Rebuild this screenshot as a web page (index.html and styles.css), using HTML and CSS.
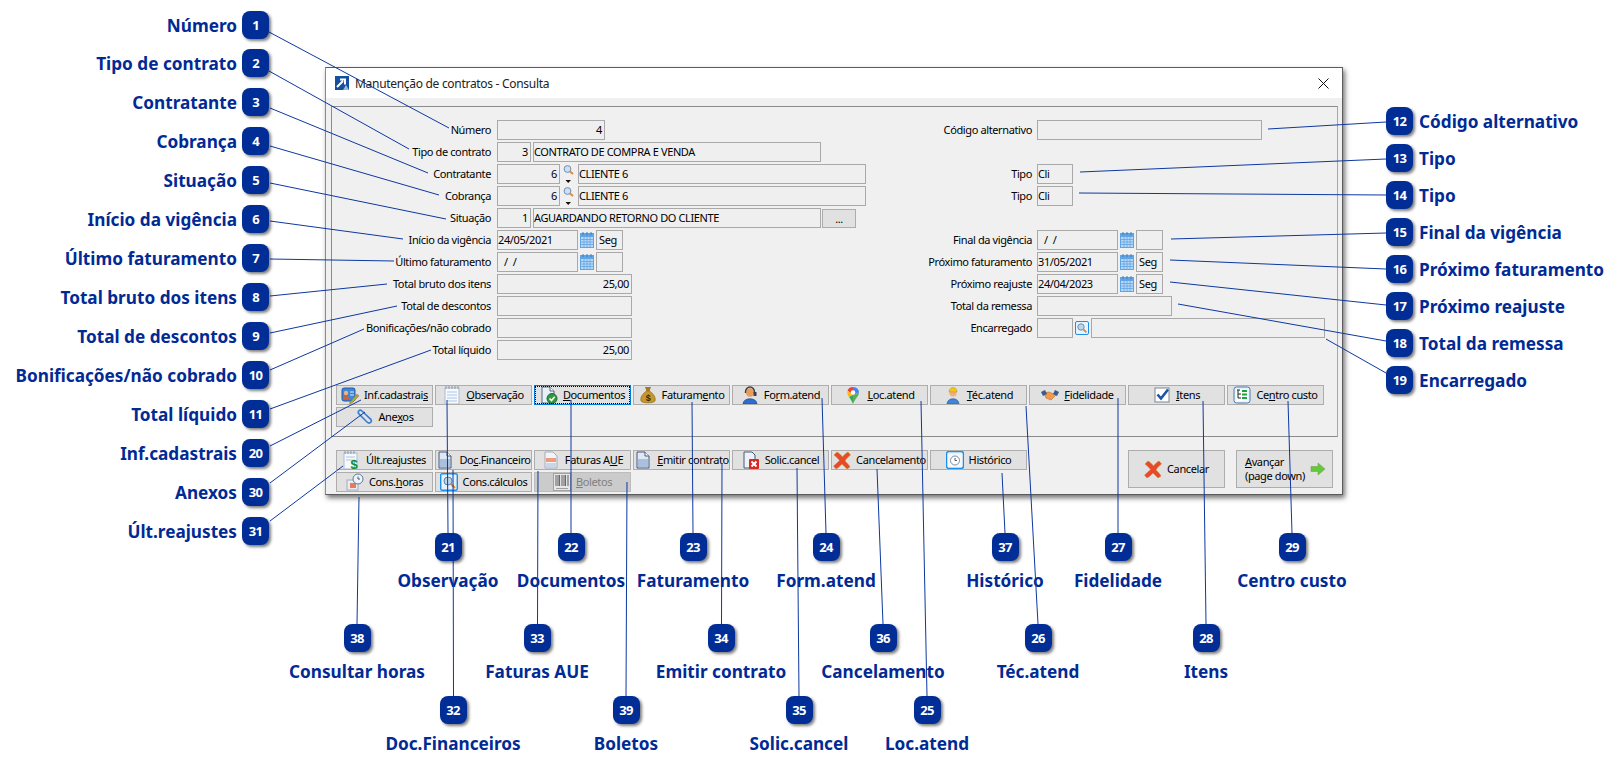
FILE: index.html
```html
<!DOCTYPE html>
<html lang="pt-BR">
<head>
<meta charset="utf-8">
<title>Manutenção de contratos - Consulta</title>
<link rel="stylesheet" href="styles.css">
</head>
<body>
<svg class="defs" width="0" height="0" aria-hidden="true">
  <defs>
    <symbol id="i-app" viewBox="0 0 14 14"><rect width="14" height="14" fill="#16509c"/><path d="M2 11 L8 5 M5 3.5 H10 V8.5" stroke="#fff" stroke-width="2" fill="none"/><path d="M8 14 L11 9 L14 14Z" fill="#9db9d8"/></symbol>
    <symbol id="i-lookup" viewBox="0 0 18 20"><circle cx="7.5" cy="5" r="3.4" fill="#cfe0f2" stroke="#6f8fb0"/><path d="M10 7.5 L13 10" stroke="#e58a3c" stroke-width="2.2"/><path d="M5.5 16 H11 L8.2 19Z" fill="#111"/></symbol>
    <symbol id="i-cal" viewBox="0 0 14 16"><rect y="1" width="14" height="15" fill="#5fa4e4"/><rect x="1" y="5" width="12" height="10" fill="#b9d8f5"/><path d="M1 7.5 H13 M1 10 H13 M1 12.5 H13 M4 5 V15 M7 5 V15 M10 5 V15" stroke="#5fa4e4" stroke-width=".8"/><path d="M3 0 V3 M7 0 V3 M11 0 V3" stroke="#3d7fc0"/></symbol>
    <symbol id="i-search" viewBox="0 0 14 14"><rect x=".5" y=".5" width="13" height="13" rx="1.5" fill="#e8f4ff" stroke="#1d8fe8"/><circle cx="6" cy="6" r="3.2" fill="#bcd6ee" stroke="#6f8fb0"/><path d="M8.4 8.4 L11.4 11.4" stroke="#e58a3c" stroke-width="2"/></symbol>
    <symbol id="i-inf" viewBox="0 0 18 18"><rect x="1" y="2" width="13" height="13" rx="2" fill="#3f86d8" stroke="#245a9e"/><circle cx="5" cy="7" r="2.2" fill="#f0b27a"/><path d="M2 13 C2 9 8 9 8 13Z" fill="#d9622b"/><path d="M9 6 H13 M9 9 H13" stroke="#dbe9f8"/><path d="M9 16 L16 8 L18 10 L11 17 L8.5 17.5Z" fill="#7cc142" stroke="#c44" stroke-width=".5"/></symbol>
    <symbol id="i-note" viewBox="0 0 18 18"><rect x="2" y="2" width="14" height="16" fill="#f6f9fd" stroke="#aebccd"/><path d="M4 6 H14 M4 9 H14 M4 12 H14 M4 15 H14" stroke="#a9c6e6"/><path d="M3 0 V3 M6 0 V3 M9 0 V3 M12 0 V3 M15 0 V3" stroke="#8c97a5"/></symbol>
    <symbol id="i-doccheck" viewBox="0 0 18 18"><path d="M2 1 H10 L14 5 V17 H2Z" fill="#e9f0f8" stroke="#54687f"/><path d="M10 1 V5 H14" fill="#fff" stroke="#54687f"/><circle cx="12" cy="12.5" r="5" fill="#2d9a3c" stroke="#1c6b29"/><path d="M9.5 12.5 L11.5 14.5 L14.7 10.8" fill="none" stroke="#fff" stroke-width="1.6"/></symbol>
    <symbol id="i-bag" viewBox="0 0 18 18"><path d="M6 1 H12 L10.5 5 H7.5Z" fill="#a8781f"/><path d="M7.5 5 H10.5 C15 8 17 12 16 15 C15 17.5 3 17.5 2 15 C1 12 3 8 7.5 5Z" fill="#c9962c" stroke="#84601a" stroke-width=".6"/><text x="9" y="14.5" font-size="9" font-weight="700" text-anchor="middle" fill="#3b2a07" font-family="Liberation Sans">$</text></symbol>
    <symbol id="i-headset" viewBox="0 0 18 18"><path d="M2 18 C2 11 16 11 16 18Z" fill="#2c6fd0" stroke="#18448a" stroke-width=".6"/><circle cx="9" cy="6.5" r="4.2" fill="#e99b5d"/><path d="M4.4 7 C4 -1 14 -1 13.6 7" fill="none" stroke="#3a3f49" stroke-width="1.4"/><rect x="12.5" y="6" width="3" height="4" fill="#3a3f49"/></symbol>
    <symbol id="i-pin" viewBox="0 0 18 18"><path d="M9 1 C13 1 15 4 15 6.5 L9 9Z" fill="#4285f4"/><path d="M9 1 C6 1 4 2.800 3.600 4.500 L9 9Z" fill="#ea4335"/><path d="M3.300 6.500 C3.300 8 4 9.500 5 11 L9 9 L3.600 4.500Z" fill="#fbbc04"/><path d="M5 11 C6.500 13 8 15 9 18 L9 9Z" fill="#34a853"/><path d="M9 18 C10 15 12 13 13.500 10.500 C14.500 9 15 8 15 6.500 L9 9Z" fill="#5fae5b"/><circle cx="9" cy="6.500" r="2.300" fill="#fff"/></symbol>
    <symbol id="i-worker" viewBox="0 0 18 18"><path d="M3 18 C3 11 15 11 15 18Z" fill="#3f86d8" stroke="#245a9e" stroke-width=".6"/><circle cx="9" cy="7" r="3.600" fill="#efb07a"/><path d="M5 6 C5 0 13 0 13 6Z" fill="#f5c518" stroke="#b48c0f" stroke-width=".5"/></symbol>
    <symbol id="i-hands" viewBox="0 0 18 18"><path d="M3 7 L8 6 L15 9 L10 14 L5 12Z" fill="#ef9a4d" stroke="#c46d20" stroke-width=".6"/><path d="M0 6 L4 4 L6 8 L2 10Z" fill="#3a5a92"/><path d="M18 6 L14 4 L12 8 L16 10Z" fill="#3a5a92"/></symbol>
    <symbol id="i-check" viewBox="0 0 18 18"><rect x="2" y="2" width="14" height="14" fill="#fff" stroke="#7d8791"/><path d="M4.500 8.500 L8 12.500 L15 3.500" fill="none" stroke="#1d52a8" stroke-width="2.600"/></symbol>
    <symbol id="i-tree" viewBox="0 0 18 18"><rect x="1" y="1" width="16" height="16" rx="2.500" fill="#e9f3fd" stroke="#4b78ad"/><rect x="3" y="3" width="12" height="12" fill="#fff"/><path d="M5 4 V12 H8 M5 8 H8 M4 4 H7" fill="none" stroke="#222"/><path d="M9 5 H14 M9 8.500 H14 M9 12 H14" stroke="#18a53c" stroke-width="2"/></symbol>
    <symbol id="i-clip" viewBox="0 0 18 18"><path d="M3 5 L12 14 C15 17 18 13 15 10.500 L7 3 C5 1 2 3 4 6 L11 13" fill="none" stroke="#3e7fcc" stroke-width="1.700"/></symbol>
    <symbol id="i-dollar" viewBox="0 0 18 18"><rect x="1" y="2" width="13" height="16" fill="#f6f9fd" stroke="#aebccd"/><path d="M3 6 H12 M3 9 H12" stroke="#a9c6e6"/><path d="M2 0 V3 M5 0 V3 M8 0 V3 M11 0 V3" stroke="#8c97a5"/><text x="11" y="17.500" font-size="13" font-weight="700" text-anchor="middle" fill="#18892e" font-family="Liberation Sans">$</text></symbol>
    <symbol id="i-doc" viewBox="0 0 18 18"><path d="M3 1 H11 L15 5 V17 H3Z" fill="#dfe8f4" stroke="#44597a"/><rect x="4" y="8" width="10" height="8" fill="#a9c0de"/><path d="M11 1 V5 H15" fill="#fff" stroke="#44597a"/></symbol>
    <symbol id="i-invoice" viewBox="0 0 18 18"><path d="M3 1 H11 L15 5 V17 H3Z" fill="#f1f4f9" stroke="#a3adbb"/><rect x="4" y="7" width="10" height="4" fill="#ef9b7c"/><rect x="4" y="12" width="10" height="4" fill="#c7d6ea"/></symbol>
    <symbol id="i-docx" viewBox="0 0 18 18"><path d="M2 1 H10 L13 4 V17 H2Z" fill="#eef2f8" stroke="#44597a"/><rect x="7" y="8" width="10" height="10" rx="1" fill="#d6281f"/><path d="M9.500 10.500 L14.500 15.500 M14.500 10.500 L9.500 15.500" stroke="#fff" stroke-width="2"/></symbol>
    <symbol id="i-x" viewBox="0 0 18 18"><path d="M1 4 L4 1 C6 2 8 4 9.500 6 C11 4 13 2 15 1 L17.500 4 C15 6 13 8 12 10 C14 12 16 14 17 16 L14 18 C12 16 10.500 14.500 9 13 C7 15 5 17 3 18 L.5 15 C3 13 5 11 6.500 9.500 C5 7.500 3 5.500 1 4Z" fill="#e8492a" stroke="#c9871e" stroke-width=".5"/></symbol>
    <symbol id="i-clock" viewBox="0 0 18 18"><rect x=".5" y=".5" width="17" height="17" rx="2.500" fill="#e3f0fd" stroke="#1d8fe8" stroke-width="1.400"/><rect x="2" y="3" width="14" height="13" fill="#f5f7fa"/><circle cx="9" cy="9.500" r="4.500" fill="#fff" stroke="#7d8ea3"/><path d="M9 7 V9.500 H11" fill="none" stroke="#49566a"/></symbol>
    <symbol id="i-clockdoc" viewBox="0 0 18 18"><rect x="1" y="7" width="11" height="10" fill="#e7ecf3" stroke="#a3adbb"/><rect x="4" y="10" width="6" height="5" fill="#e8795a"/><circle cx="12" cy="6" r="5" fill="#eef4fa" stroke="#5a7a9c"/><path d="M12 3.500 V6 H14" fill="none" stroke="#49566a"/></symbol>
    <symbol id="i-calc" viewBox="0 0 18 18"><rect x=".7" y=".7" width="16.600" height="16.600" rx="1.500" fill="#e5f2fd" stroke="#1d8fe8" stroke-width="1.400"/><circle cx="8" cy="8" r="4" fill="#bcd6ee" stroke="#5e7f9f"/><path d="M11 11 L15 15" stroke="#e58a3c" stroke-width="2.200"/></symbol>
    <symbol id="i-barcode" viewBox="0 0 18 18"><rect x=".5" y=".5" width="17" height="17" fill="#ececec" stroke="#9a9a9a"/><path d="M3 2 V13 M5 2 V13 M6.500 2 V13 M9 2 V13 M11 2 V13 M12.500 2 V13 M15 2 V13" stroke="#5a5a5a" stroke-width="1.100"/><path d="M3 15.500 H15" stroke="#999"/></symbol>
    <symbol id="i-arrow" viewBox="0 0 16 14"><path d="M1 4.500 H8 V1 L15 7 L8 13 V9.500 H1Z" fill="#62c93a" stroke="#7f9a55" stroke-width=".6"/></symbol>
  </defs>
</svg>

<main class="canvas">
  <section class="dialog">
    <header class="titlebar">
      <svg class="app-icon"><use href="#i-app"/></svg>
      <h1 class="title">Manutenção de contratos - Consulta</h1>
      <svg class="close" viewBox="0 0 11 11"><path d="M.5 .5 L10.500 10.500 M10.500 .5 L.5 10.500" stroke="#111" stroke-width="1" fill="none"/></svg>
    </header>

    <div class="frame">
      <div class="fields">
        <div class="col col-left">
          <div class="row"><label class="lab lab-left">Número</label><div class="f num w-108">4</div></div>
          <div class="row"><label class="lab lab-left">Tipo de contrato</label><div class="f num w-34">3</div><div class="f w-288 ml-2">CONTRATO DE COMPRA E VENDA</div></div>
          <div class="row"><label class="lab lab-left">Contratante</label><div class="f num w-63">6</div><svg class="lookup"><use href="#i-lookup"/></svg><div class="f w-288">CLIENTE 6</div></div>
          <div class="row"><label class="lab lab-left">Cobrança</label><div class="f num w-63">6</div><svg class="lookup"><use href="#i-lookup"/></svg><div class="f w-288">CLIENTE 6</div></div>
          <div class="row"><label class="lab lab-left">Situação</label><div class="f num w-34">1</div><div class="f w-288 ml-2">AGUARDANDO RETORNO DO CLIENTE</div><div class="dots">...</div></div>
          <div class="row"><label class="lab lab-left">Início da vigência</label><div class="f w-81">24/05/2021</div><svg class="cal"><use href="#i-cal"/></svg><div class="f w-27 pad">Seg</div></div>
          <div class="row"><label class="lab lab-left">Último faturamento</label><div class="f w-81 pad-date">/ &nbsp;/</div><svg class="cal"><use href="#i-cal"/></svg><div class="f w-27"></div></div>
          <div class="row"><label class="lab lab-left">Total bruto dos itens</label><div class="f num w-135">25,00</div></div>
          <div class="row"><label class="lab lab-left">Total de descontos</label><div class="f num w-135"></div></div>
          <div class="row"><label class="lab lab-left">Bonificações/não cobrado</label><div class="f num w-135"></div></div>
          <div class="row"><label class="lab lab-left">Total líquido</label><div class="f num w-135">25,00</div></div>
        </div>
        <div class="col col-right">
          <div class="row"><label class="lab lab-right">Código alternativo</label><div class="f w-225"></div></div>
          <div class="row"></div>
          <div class="row"><label class="lab lab-right">Tipo</label><div class="f w-36">Cli</div></div>
          <div class="row"><label class="lab lab-right">Tipo</label><div class="f w-36">Cli</div></div>
          <div class="row"></div>
          <div class="row"><label class="lab lab-right">Final da vigência</label><div class="f w-81 pad-date">/ &nbsp;/</div><svg class="cal"><use href="#i-cal"/></svg><div class="f w-27"></div></div>
          <div class="row"><label class="lab lab-right">Próximo faturamento</label><div class="f w-81">31/05/2021</div><svg class="cal"><use href="#i-cal"/></svg><div class="f w-27 pad">Seg</div></div>
          <div class="row"><label class="lab lab-right">Próximo reajuste</label><div class="f w-81">24/04/2023</div><svg class="cal"><use href="#i-cal"/></svg><div class="f w-27 pad">Seg</div></div>
          <div class="row"><label class="lab lab-right">Total da remessa</label><div class="f w-135"></div></div>
          <div class="row"><label class="lab lab-right">Encarregado</label><div class="f w-36"></div><svg class="search"><use href="#i-search"/></svg><div class="f w-234"></div></div>
        </div>
      </div>

      <div class="btn-grid tabs">
        <button class="btn"><svg class="ico"><use href="#i-inf"/></svg><span>Inf.cadastrai<u>s</u></span></button>
        <button class="btn"><svg class="ico"><use href="#i-note"/></svg><span><u>O</u>bservação</span></button>
        <button class="btn focus"><svg class="ico"><use href="#i-doccheck"/></svg><span><u>D</u>ocumentos</span></button>
        <button class="btn"><svg class="ico"><use href="#i-bag"/></svg><span>Faturam<u>e</u>nto</span></button>
        <button class="btn"><svg class="ico"><use href="#i-headset"/></svg><span>Fo<u>r</u>m.atend</span></button>
        <button class="btn"><svg class="ico"><use href="#i-pin"/></svg><span><u>L</u>oc.atend</span></button>
        <button class="btn"><svg class="ico"><use href="#i-worker"/></svg><span><u>T</u>éc.atend</span></button>
        <button class="btn"><svg class="ico"><use href="#i-hands"/></svg><span><u>F</u>idelidade</span></button>
        <button class="btn"><svg class="ico"><use href="#i-check"/></svg><span><u>I</u>tens</span></button>
        <button class="btn"><svg class="ico"><use href="#i-tree"/></svg><span>Ce<u>n</u>tro custo</span></button>
        <button class="btn"><svg class="ico"><use href="#i-clip"/></svg><span>Ane<u>x</u>os</span></button>
      </div>
    </div>

    <footer class="footer">
      <div class="btn-grid actions">
        <button class="btn"><svg class="ico"><use href="#i-dollar"/></svg><span>Últ.rea<u>j</u>ustes</span></button>
        <button class="btn"><svg class="ico"><use href="#i-doc"/></svg><span>Do<u>c</u>.Financeiro</span></button>
        <button class="btn"><svg class="ico"><use href="#i-invoice"/></svg><span>Faturas A<u>U</u>E</span></button>
        <button class="btn"><svg class="ico"><use href="#i-doc"/></svg><span><u>E</u>mitir contrato</span></button>
        <button class="btn"><svg class="ico"><use href="#i-docx"/></svg><span>Solic.cancel</span></button>
        <button class="btn"><svg class="ico"><use href="#i-x"/></svg><span>Cancelamento</span></button>
        <button class="btn"><svg class="ico"><use href="#i-clock"/></svg><span>Histórico</span></button>
        <button class="btn"><svg class="ico"><use href="#i-clockdoc"/></svg><span>Cons.<u>h</u>oras</span></button>
        <button class="btn"><svg class="ico"><use href="#i-calc"/></svg><span>Cons.cálculos</span></button>
        <button class="btn disabled"><svg class="ico"><use href="#i-barcode"/></svg><span><u>B</u>oletos</span></button>
      </div>
      <div class="main-actions">
        <button class="btn big"><svg class="ico"><use href="#i-x"/></svg><span>Cancelar</span></button>
        <button class="btn big next"><span><u>A</u>vançar<br>(page down)</span><svg class="arrow"><use href="#i-arrow"/></svg></button>
      </div>
    </footer>
  </section>

  <div class="stack stack-left">
    <div class="call"><span class="txt">Número</span><b class="badge">1</b></div>
    <div class="call"><span class="txt">Tipo de contrato</span><b class="badge">2</b></div>
    <div class="call"><span class="txt">Contratante</span><b class="badge">3</b></div>
    <div class="call"><span class="txt">Cobrança</span><b class="badge">4</b></div>
    <div class="call"><span class="txt">Situação</span><b class="badge">5</b></div>
    <div class="call"><span class="txt">Início da vigência</span><b class="badge">6</b></div>
    <div class="call"><span class="txt">Último faturamento</span><b class="badge">7</b></div>
    <div class="call"><span class="txt">Total bruto dos itens</span><b class="badge">8</b></div>
    <div class="call"><span class="txt">Total de descontos</span><b class="badge">9</b></div>
    <div class="call"><span class="txt">Bonificações/não cobrado</span><b class="badge">10</b></div>
    <div class="call"><span class="txt">Total líquido</span><b class="badge">11</b></div>
    <div class="call"><span class="txt">Inf.cadastrais</span><b class="badge">20</b></div>
    <div class="call"><span class="txt">Anexos</span><b class="badge">30</b></div>
    <div class="call"><span class="txt">Últ.reajustes</span><b class="badge">31</b></div>
  </div>

  <div class="stack stack-right">
    <div class="call"><b class="badge">12</b><span class="txt">Código alternativo</span></div>
    <div class="call"><b class="badge">13</b><span class="txt">Tipo</span></div>
    <div class="call"><b class="badge">14</b><span class="txt">Tipo</span></div>
    <div class="call"><b class="badge">15</b><span class="txt">Final da vigência</span></div>
    <div class="call"><b class="badge">16</b><span class="txt">Próximo faturamento</span></div>
    <div class="call"><b class="badge">17</b><span class="txt">Próximo reajuste</span></div>
    <div class="call"><b class="badge">18</b><span class="txt">Total da remessa</span></div>
    <div class="call"><b class="badge">19</b><span class="txt">Encarregado</span></div>
  </div>

  <div class="below c21"><b class="badge">21</b><span class="txt">Observação</span></div>
  <div class="below c22"><b class="badge">22</b><span class="txt">Documentos</span></div>
  <div class="below c23"><b class="badge">23</b><span class="txt">Faturamento</span></div>
  <div class="below c24"><b class="badge">24</b><span class="txt">Form.atend</span></div>
  <div class="below c37"><b class="badge">37</b><span class="txt">Histórico</span></div>
  <div class="below c27"><b class="badge">27</b><span class="txt">Fidelidade</span></div>
  <div class="below c29"><b class="badge">29</b><span class="txt">Centro custo</span></div>
  <div class="below c38"><b class="badge">38</b><span class="txt">Consultar horas</span></div>
  <div class="below c33"><b class="badge">33</b><span class="txt">Faturas AUE</span></div>
  <div class="below c34"><b class="badge">34</b><span class="txt">Emitir contrato</span></div>
  <div class="below c36"><b class="badge">36</b><span class="txt">Cancelamento</span></div>
  <div class="below c26"><b class="badge">26</b><span class="txt">Téc.atend</span></div>
  <div class="below c28"><b class="badge">28</b><span class="txt">Itens</span></div>
  <div class="below c32"><b class="badge">32</b><span class="txt">Doc.Financeiros</span></div>
  <div class="below c39"><b class="badge">39</b><span class="txt">Boletos</span></div>
  <div class="below c35"><b class="badge">35</b><span class="txt">Solic.cancel</span></div>
  <div class="below c25"><b class="badge">25</b><span class="txt">Loc.atend</span></div>

  <svg class="leaders" viewBox="0 0 1621 771">
    <line x1="269" y1="32" x2="449" y2="128"/>
    <line x1="269" y1="71" x2="409" y2="149"/>
    <line x1="270" y1="108" x2="428" y2="173"/>
    <line x1="270" y1="146" x2="439" y2="195"/>
    <line x1="270" y1="183" x2="446" y2="219"/>
    <line x1="270" y1="221" x2="403" y2="239"/>
    <line x1="270" y1="259" x2="394" y2="261"/>
    <line x1="270" y1="296" x2="387" y2="284"/>
    <line x1="270" y1="333" x2="397" y2="306"/>
    <line x1="270" y1="370" x2="364" y2="329"/>
    <line x1="270" y1="409" x2="431" y2="350"/>
    <line x1="270" y1="446" x2="361" y2="400"/>
    <line x1="270" y1="483" x2="365" y2="412"/>
    <line x1="270" y1="521" x2="343" y2="466"/>
    <line x1="1268" y1="129" x2="1386" y2="122"/>
    <line x1="1080" y1="172" x2="1386" y2="159"/>
    <line x1="1079" y1="193" x2="1386" y2="195"/>
    <line x1="1171" y1="239" x2="1386" y2="233"/>
    <line x1="1170" y1="260" x2="1386" y2="269"/>
    <line x1="1170" y1="282" x2="1386" y2="305"/>
    <line x1="1178" y1="304" x2="1386" y2="341"/>
    <line x1="1326" y1="339" x2="1386" y2="373"/>
    <line x1="447" y1="400" x2="448" y2="533"/>
    <line x1="453" y1="470" x2="453.500" y2="696"/>
    <line x1="571" y1="400" x2="571" y2="533"/>
    <line x1="538" y1="471" x2="537.500" y2="624"/>
    <line x1="627" y1="482" x2="626" y2="696"/>
    <line x1="692" y1="402" x2="693" y2="533"/>
    <line x1="722" y1="464" x2="721.500" y2="624"/>
    <line x1="797" y1="468" x2="799" y2="696"/>
    <line x1="822" y1="398" x2="826" y2="533"/>
    <line x1="921" y1="401" x2="927" y2="696"/>
    <line x1="877" y1="469" x2="883" y2="624"/>
    <line x1="1002" y1="473" x2="1005" y2="533"/>
    <line x1="1026" y1="406" x2="1038" y2="624"/>
    <line x1="1118" y1="398" x2="1118" y2="533"/>
    <line x1="1203" y1="401" x2="1206" y2="624"/>
    <line x1="1288" y1="401" x2="1292" y2="533"/>
    <line x1="359" y1="497" x2="357" y2="624"/>
  </svg>
</main>
</body>
</html>
```

FILE: styles.css
```css
* { box-sizing: border-box; }
html, body { margin: 0; height: 100%; background: #fff; overflow: hidden; }
.defs { position: absolute; }
.canvas { position: relative; width: 1621px; height: 771px; font-family: "Noto Sans", "DejaVu Sans", sans-serif; }

/* dialog window */
.dialog {
  position: absolute; left: 325px; top: 67px; width: 1018px; height: 428px;
  background: #f0f0f0; border: 1px solid #5c5c5c; border-left-color: #8a8a8a;
  box-shadow: 2px 3px 5px rgba(0, 0, 0, .55);
  display: flex; flex-direction: column;
  font-family: "Noto Sans", sans-serif; font-size: 11px; letter-spacing: -.38px; color: #000;
}
.titlebar { height: 30px; flex: none; background: #fff; display: flex; align-items: center; padding: 0 9px; }
.app-icon { width: 14px; height: 14px; flex: none; }
.title { margin: 0 0 0 6px; font: 400 12px "Noto Sans", sans-serif; letter-spacing: -.3px; color: #222; flex: 1; }
.close { width: 11px; height: 11px; flex: none; margin-right: 4px; }

.frame {
  margin: 8px 4px 0 5px; height: 331px; flex: none;
  border: 1px solid #8c8c8c; border-right-color: #a8a8a8;
  padding-top: 13px; padding-left: 0;
}
.fields { display: flex; height: 240px; }
.col { display: flex; flex-direction: column; gap: 2px; }
.col-left { width: 548px; }
.row { display: flex; height: 20px; align-items: stretch; flex: none; }
.lab { display: flex; align-items: center; justify-content: flex-end; white-space: nowrap; padding-bottom: 1px; }
.lab-left { width: 159px; margin-right: 6px; }
.lab-right { width: 152px; margin-right: 5px; }

.f {
  border: 1px solid #a9a9a9; background: #efefef; display: flex; align-items: center;
  padding: 0 0 1px; white-space: nowrap; flex: none;
}
.num { justify-content: flex-end; padding-right: 2px; }
.pad { padding-left: 2px; }
.pad-date { padding-left: 6px; }
.ml-2 { margin-left: 2px; }
.w-27 { width: 27px; }
.w-34 { width: 34px; }
.w-36 { width: 36px; }
.w-63 { width: 63px; }
.w-81 { width: 81px; }
.w-108 { width: 108px; }
.w-135 { width: 135px; }
.w-225 { width: 225px; }
.w-234 { width: 234px; }
.w-288 { width: 288px; }

.lookup { width: 18px; height: 20px; flex: none; }
.cal { width: 14px; height: 16px; flex: none; margin: 2px 2px 0; }
.search { width: 14px; height: 14px; flex: none; margin: 3px 2px 0; }
.dots {
  width: 34px; margin-left: 1px; margin-top: 1px; border: 1px solid #adadad; background: #e1e1e1;
  display: flex; align-items: center; justify-content: center; flex: none;
}

/* buttons */
.btn-grid { display: grid; grid-template-columns: repeat(10, 97px); grid-auto-rows: 20px; gap: 2px; }
.tabs { margin: 25px 0 0 4px; }
.actions { grid-template-columns: repeat(7, 97px); }
.btn {
  font: inherit; letter-spacing: inherit; color: inherit; padding: 0 0 1px; margin: 0; cursor: default;
  background: #e1e1e1; border: 1px solid #adadad;
  display: flex; align-items: center; justify-content: center; gap: 5px; white-space: nowrap;
}
.ico { width: 18px; height: 18px; flex: none; }
.focus { border: 1px solid #0078d7; outline: 1px dotted #000; outline-offset: -2px; }
.disabled { background: #cbcbcb; border-color: #bdbdbd; color: #808080; }
.disabled .ico { opacity: .85; }

.footer { display: flex; margin: 13px 0 0 10px; }
.main-actions { display: flex; gap: 11px; margin-left: 101px; }
.big { width: 97px; height: 38px; }
.next { justify-content: space-between; padding: 0 8px 1px; text-align: left; line-height: 14px; }
.arrow { width: 16px; height: 14px; flex: none; }

/* callouts */
.txt { font: 700 17.2px/22px "Noto Sans", sans-serif; color: #012a94; white-space: nowrap; padding-top: 1px; }
.badge {
  position: relative; z-index: 3; flex: none; width: 27px; height: 28px; border-radius: 8px;
  background: #012d96; color: #fff; box-shadow: 2px 2px 3px rgba(0, 0, 0, .5);
  display: flex; align-items: center; justify-content: center;
  font: 700 13px "Noto Sans", sans-serif; letter-spacing: -.8px;
}
.stack { position: absolute; display: flex; flex-direction: column; }
.stack-left { right: calc(1621px - 269px); top: 11px; gap: 11px; align-items: flex-end; }
.stack-left .call:first-child { margin-bottom: -1px; }
.stack-right { left: 1386px; top: 107px; gap: 9px; align-items: flex-start; }
.call { display: flex; align-items: center; gap: 5px; height: 28px; }
.stack-right .call { gap: 6px; }

.below { position: absolute; width: 200px; display: flex; flex-direction: column; align-items: center; gap: 8px; }
.c21 { left: 348px; top: 533px; }
.c22 { left: 471px; top: 533px; }
.c23 { left: 593px; top: 533px; }
.c24 { left: 726px; top: 533px; }
.c37 { left: 905px; top: 533px; }
.c27 { left: 1018px; top: 533px; }
.c29 { left: 1192px; top: 533px; }
.c38 { left: 257px; top: 624px; }
.c33 { left: 437px; top: 624px; }
.c34 { left: 621px; top: 624px; }
.c36 { left: 783px; top: 624px; }
.c26 { left: 938px; top: 624px; }
.c28 { left: 1106px; top: 624px; }
.c32 { left: 353px; top: 696px; }
.c39 { left: 526px; top: 696px; }
.c35 { left: 699px; top: 696px; }
.c25 { left: 827px; top: 696px; }

.leaders { position: absolute; left: 0; top: 0; width: 1621px; height: 771px; z-index: 2; pointer-events: none; }
.leaders line { stroke: #0d38a0; stroke-width: 1; }
```
